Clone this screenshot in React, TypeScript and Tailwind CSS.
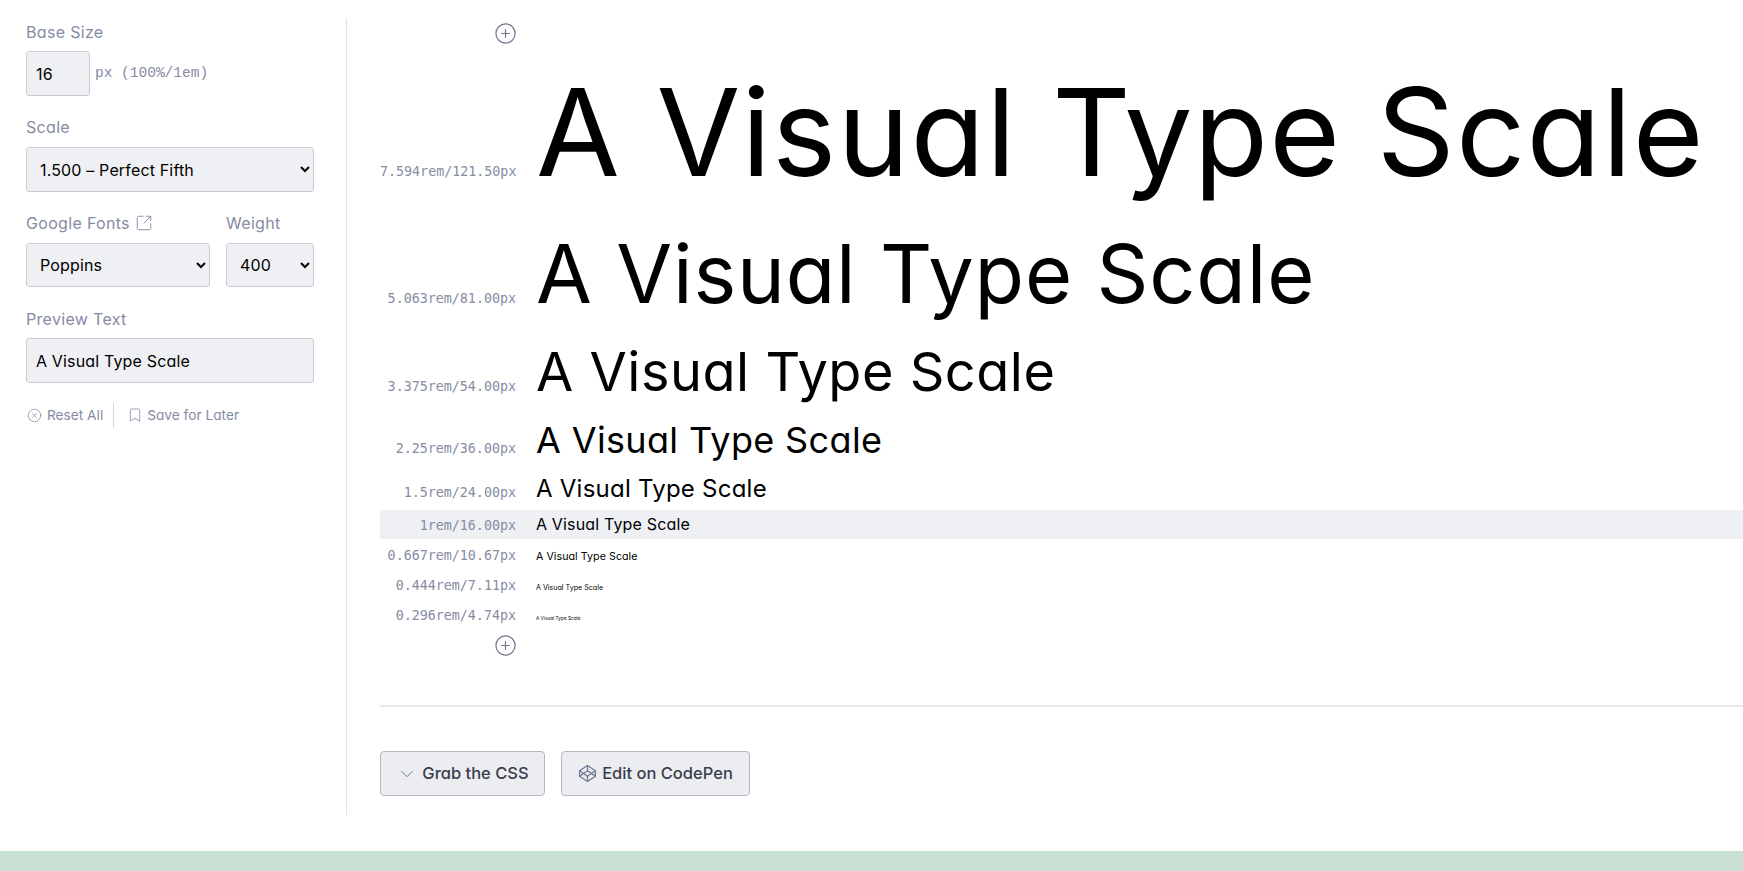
import { Bookmark, ChevronDown, CirclePlus, CircleX, Codepen, SquareArrowOutUpRight } from 'lucide-react';

const PREVIEW = 'A Visual Type Scale';

const ROWS = [
  { label: '7.594rem/121.50px', row: 'h-[167px]', text: 'text-[121.5px] leading-[1.2] tracking-[0.01em]' },
  { label: '5.063rem/81.00px', row: 'h-[114px]', text: 'text-[81px] leading-[1.2] tracking-[0.01em]' },
  { label: '3.375rem/54.00px', row: 'h-[79px]', text: 'text-[54px] leading-[1.2] tracking-[0.01em]' },
  { label: '2.25rem/36.00px', row: 'h-[56px]', text: 'text-[36px] leading-[1.2] tracking-[0.01em]' },
  { label: '1.5rem/24.00px', row: 'h-[35px]', text: 'text-[24px] leading-[1.2] tracking-[0.01em]' },
  { label: '1rem/16.00px', row: 'h-[29px] mb-[2px] bg-[#eff0f4]', text: 'text-[16px] leading-[29px] tracking-[0.01em]' },
  { label: '0.667rem/10.67px', row: 'h-[30px]', text: 'text-[10.67px] leading-[29px] tracking-[0.005em]' },
  { label: '0.444rem/7.11px', row: 'h-[30px]', text: 'text-[7.11px] leading-[29px]' },
  { label: '0.296rem/4.74px', row: 'h-[33px]', text: 'text-[4.74px] leading-[29px]' },
];

function Label({ children }: { children: React.ReactNode }) {
  return <div className="text-[16px] leading-6 tracking-[0.02em] text-[#868ca3] mb-[8px]">{children}</div>;
}

const field = 'bg-[#eff0f4] border border-[#c9ccd4] rounded-[3px] text-[16px] tracking-[0.01em] text-black';

export default function App() {
  return (
    <div className="w-[1743px] h-[871px] overflow-hidden bg-white flex flex-col font-['Inter',sans-serif] [font-feature-settings:'cv11']">
      <div className="flex flex-1 min-h-0">
        {/* controls */}
        <aside className="w-[347px] shrink-0 mt-[18px] mb-[36px] pl-[26px] pr-[32px] pt-[2px] border-r border-[#e2e3e8]">
          <Label>Base Size</Label>
          <div className="flex items-center gap-[5px] -mt-[1px]">
            <input readOnly value="16" className={`${field} h-[45px] w-[64px] pl-[9px]`} />
            <span className="font-['Liberation_Mono',monospace] text-[14.5px] tracking-normal text-[#868ca3]">px (100%/1em)</span>
          </div>

          <div className="mt-[19px]"><Label>Scale</Label></div>
          <select className={`${field} h-[45px] w-full pl-[9px] block`} defaultValue="1.5">
            <option value="1.5">1.500 – Perfect Fifth</option>
          </select>

          <div className="flex gap-[16px] mt-[19px]">
            <div className="w-[184px]">
              <Label>
                <span className="flex items-center gap-[5px]">
                  Google Fonts
                  <SquareArrowOutUpRight size={18} strokeWidth={1.25} />
                </span>
              </Label>
              <select className={`${field} h-[44px] w-full pl-[9px] block`}>
                <option>Poppins</option>
              </select>
            </div>
            <div className="w-[88px]">
              <Label>Weight</Label>
              <select className={`${field} h-[44px] w-full pl-[9px] block`}>
                <option>400</option>
              </select>
            </div>
          </div>

          <div className="mt-[20px]"><Label>Preview Text</Label></div>
          <input readOnly value={PREVIEW} className={`${field} h-[45px] w-full pl-[9px] -mt-[1px] block`} />

          <div className="flex items-center mt-[20px] h-[25px] text-[13.7px] text-[#868ca3]">
            <span className="flex items-center gap-[5px] pl-[1px] pr-[10px] h-full border-r border-[#d5d7de]">
              <CircleX size={15} strokeWidth={1.25} />
              Reset All
            </span>
            <span className="flex items-center gap-[4px] pl-[13px]">
              <Bookmark size={16} strokeWidth={1.25} />
              Save for Later
            </span>
          </div>
        </aside>

        {/* type scale */}
        <main className="flex-1 min-w-0 pl-[33px]">
          <div className="w-[137px] flex justify-end pt-[22px]">
            <CirclePlus size={23} strokeWidth={1.25} className="text-[#6f7690]" />
          </div>
          <div className="mt-[14px]">
            {ROWS.map((r) => (
              <div key={r.label} className={`flex items-baseline gap-[20px] whitespace-nowrap ${r.row}`}>
                <div className="w-[136px] shrink-0 text-right font-['DejaVu_Sans_Mono',monospace] text-[13.33px] leading-[29px] text-[#868ca3]">
                  {r.label}
                </div>
                <div className={`text-black ${r.text}`}>{PREVIEW}</div>
              </div>
            ))}
          </div>
          <div className="w-[137px] flex justify-end">
            <CirclePlus size={23} strokeWidth={1.25} className="text-[#6f7690]" />
          </div>

          <hr className="border-0 border-t-2 border-[#e8e9ed] mt-[48px]" />

          <div className="flex gap-[16px] mt-[44px]">
            <button className="h-[45px] w-[165px] flex items-center justify-center gap-[4px] bg-[#ebedf1] border border-[#b4b7c3] rounded-[4px] text-[16.5px] font-medium text-[#3a3d4c]">
              <ChevronDown size={22} strokeWidth={1} className="text-[#6f7690]" />
              Grab the CSS
            </button>
            <button className="h-[45px] w-[189px] flex items-center justify-center gap-[5px] bg-[#ebedf1] border border-[#b4b7c3] rounded-[4px] text-[16.5px] font-medium text-[#3a3d4c]">
              <Codepen size={19} strokeWidth={1.5} className="text-[#6f7690]" />
              Edit on CodePen
            </button>
          </div>
        </main>
      </div>
      <div className="h-[20px] shrink-0 bg-[#c8e1d3]" />
    </div>
  );
}
